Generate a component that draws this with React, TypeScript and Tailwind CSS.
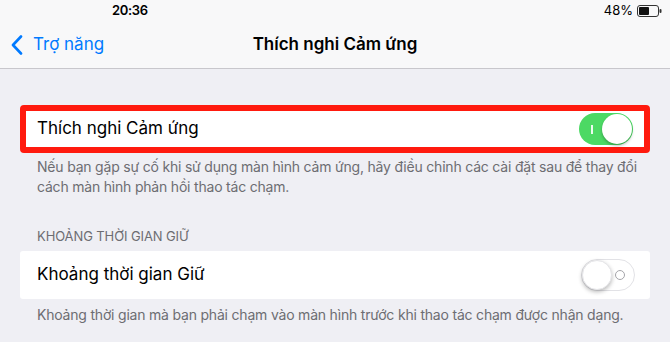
import React from "react"

const font = { fontFamily: "Inter, 'Noto Sans', sans-serif" }

function Battery() {
  return (
    <svg width="25" height="12" viewBox="0 0 25 12" className="shrink-0">
      <rect x="0.5" y="0.5" width="21" height="11" rx="2.5" fill="none" stroke="#333" strokeWidth="1" />
      <rect x="2" y="2" width="10" height="8" rx="1" fill="#111" />
      <rect x="22.5" y="4" width="2" height="4" rx="1" fill="#333" />
    </svg>
  )
}

function Toggle({ on }: { on: boolean }) {
  if (on) {
    return (
      <div className="relative w-[54px] h-[32px] rounded-full bg-[#4cd964]">
        <div className="absolute left-[12px] top-[12px] w-[1.5px] h-[9px] bg-white/90" />
        <div className="absolute right-[1px] top-[1px] w-[30px] h-[30px] rounded-full bg-white shadow-[0_2px_3px_rgba(0,0,0,0.25)]" />
      </div>
    )
  }
  return (
    <div className="relative w-[54px] h-[32px] rounded-full bg-white border border-[#e2e2e6]">
      <div className="absolute right-[9px] top-[10px] w-[10px] h-[10px] rounded-full border border-[#a5a5aa]" />
      <div className="absolute left-[0px] top-[0px] w-[30px] h-[30px] rounded-full bg-white shadow-[0_2px_4px_rgba(0,0,0,0.28)] border border-[#e5e5e8]" />
    </div>
  )
}

export default function App() {
  return (
    <div className="w-[670px] h-[342px] overflow-hidden bg-[#efeff4] text-black" style={font}>
      {/* Status bar */}
      <div className="h-[22px] flex items-center justify-between bg-[#f8f8f9] pl-[112px] pr-[8px]">
        <span className="text-[13px] font-semibold tracking-tight">20:36</span>
        <div className="flex items-center gap-[4px]">
          <span className="text-[13px]">48%</span>
          <Battery />
        </div>
      </div>

      {/* Nav bar */}
      <div className="h-[47px] grid grid-cols-[1fr_auto_1fr] items-center bg-[#f8f8f9] border-b border-[#c8c7cc]">
        <div className="flex items-center pl-[11px] text-[#007aff]">
          <svg width="12" height="20" viewBox="0 0 12 20">
            <path d="M10 1.5 L2 10 L10 18.5" fill="none" stroke="#007aff" strokeWidth="2.6" strokeLinecap="round" strokeLinejoin="round" />
          </svg>
          <span className="ml-[10px] text-[17px]">Trợ năng</span>
        </div>
        <div className="text-[17px] font-semibold">Thích nghi Cảm ứng</div>
        <div />
      </div>

      <div className="px-[20px] pt-[36px]">
        <div className="h-[48px] flex items-center justify-between bg-white border-[6px] border-[#ff1a0e] rounded-[4px] pl-[11px] pr-[11px]">
          <span className="text-[17px]">Thích nghi Cảm ứng</span>
          <Toggle on />
        </div>
        <p className="pt-[4px] pl-[17px] pr-[10px] text-[14px] leading-[20px] tracking-[-0.2px] text-[#6d6d72]">
          Nếu bạn gặp sự cố khi sử dụng màn hình cảm ứng, hãy điều chỉnh các cài đặt sau để thay đổi cách màn hình phản hồi thao tác chạm.
        </p>

        <div className="pt-[31px] pl-[17px] text-[13px] leading-[16px] tracking-[-0.1px] text-[#6d6d72] uppercase">
          Khoảng thời gian giữ
        </div>
        <div className="mt-[7px] h-[48px] flex items-center justify-between bg-white rounded-[3px] pl-[17px] pr-[15px]">
          <span className="text-[17px]">Khoảng thời gian Giữ</span>
          <Toggle on={false} />
        </div>
        <p className="pt-[6px] pl-[17px] text-[14px] leading-[20px] tracking-[-0.2px] text-[#6d6d72]">
          Khoảng thời gian mà bạn phải chạm vào màn hình trước khi thao tác chạm được nhận dạng.
        </p>
      </div>
    </div>
  )
}
